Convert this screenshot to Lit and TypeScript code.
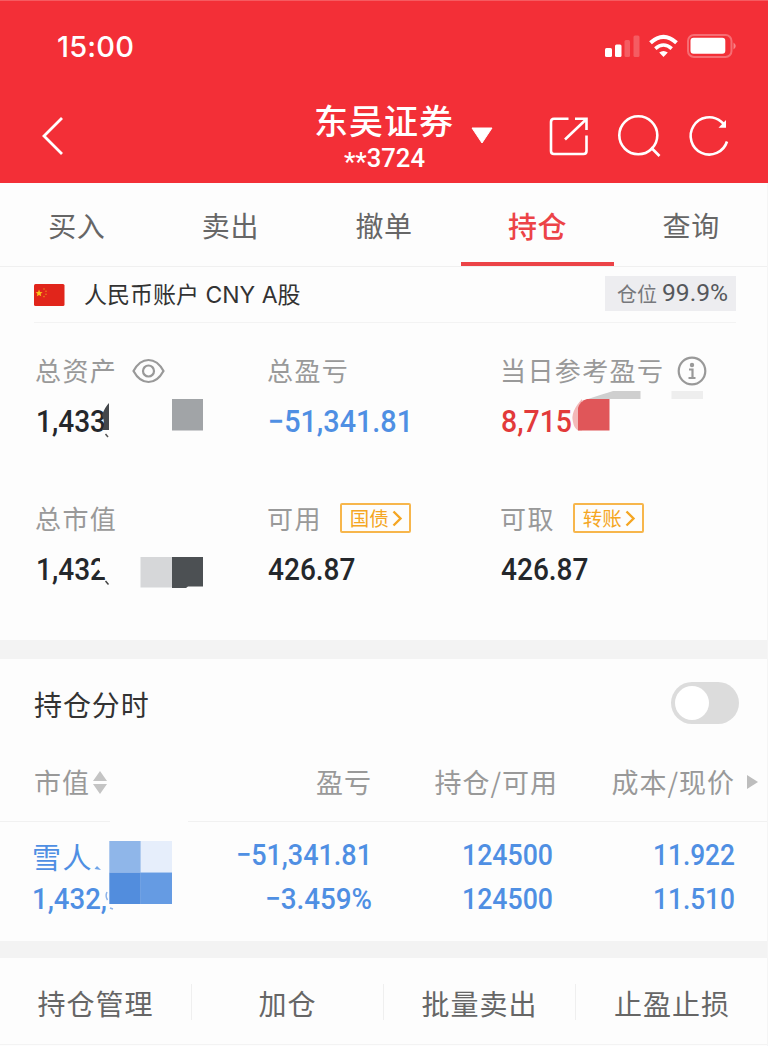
import { LitElement, html, css, svg } from "lit";
import { customElement } from "lit/decorators.js";

const num = (text: unknown, width: number, cls = "", size = 31) => html`<svg
  class="num ${cls}" width=${width} height="32" viewBox="0 0 ${width} 32">
  <text x="0" y="27" font-size=${size} textLength=${width} lengthAdjust="spacingAndGlyphs">${text}</text>
</svg>`;

const chevron = svg`<path d="M1.5 1.5 L8.5 8.5 L1.5 15.5" fill="none" stroke="#f5a623" stroke-width="2.4"/>`;

@customElement("app-root")
export class AppRoot extends LitElement {
  static styles = css`
    :host {
      display: block;
      position: relative;
      width: 768px;
      height: 1046px;
      overflow: hidden;
      background: #fdfdfd;
      font-family: Roboto, "Noto Sans CJK SC", sans-serif;
      color: #333;
      line-height: 1;
    }
    * { box-sizing: border-box; }
    svg { display: block; overflow: visible; flex: none; }
    .num text { font-family: Roboto, sans-serif; font-weight: 500; fill: #24272b; }
    .num.blue text { fill: #4f8fe3; }
    .num.red text { fill: #e23a3a; }
    .num.white text { fill: #fff; }
    .num.gray text { fill: #55575b; font-weight: 400; }

    header { height: 183px; background: #f32f37; color: #fff; border-top: 1px solid #f65a60; }
    .status { height: 91px; display: flex; align-items: center; padding: 0 32px 0 57px; justify-content: space-between; }
    .time { font: 550 29px/32px Inter, sans-serif; letter-spacing: 0.2px; }
    .nav { height: 91px; display: grid; grid-template-columns: 300px 168px 60px 1fr; align-items: start; }
    .back { padding: 25px 0 0 42px; }
    .title { display: flex; flex-direction: column; align-items: center; }
    .broker { font: 500 34px/40px "Noto Sans CJK SC", sans-serif; letter-spacing: 1px; margin-top: 8px; white-space: nowrap; }
    .acct { margin-top: 0; }
    .caret { padding: 35px 0 0 3px; }
    .tools { display: flex; padding: 23px 0 0 20px; gap: 28px; }

    .tabs { height: 84px; display: grid; grid-template-columns: repeat(5, 1fr); border-bottom: 1px solid #f0f0f0; }
    .tab { display: flex; justify-content: center; padding-top: 22px; font: 400 28px/40px "Noto Sans CJK SC", sans-serif; letter-spacing: 0.6px; color: #666; border-bottom: 4px solid transparent; }
    .tab.on { color: #ec4347; border-color: #ec4347; font-weight: 500; font-size: 29px; }

    .account { margin: 0 32px 0 34px; height: 56px; display: flex; align-items: center; border-bottom: 1px solid #f3f3f3; }
    .cny { margin-left: 19px; flex: 1; font: 400 23px/32px Inter, "Noto Sans CJK SC", sans-serif; color: #333; white-space: nowrap; }
    .pos { display: flex; align-items: center; width: 131px; height: 35px; background: #ededf0; padding-left: 12px; gap: 5px; margin-bottom: 2px; font: 400 20px/30px "Noto Sans CJK SC", sans-serif; color: #77787c; white-space: nowrap; }
    .pos .num { margin-bottom: 7px; }

    .stats { height: 317px; padding: 29px 0 0 35px; display: grid; grid-template-columns: 232px 233px 1fr; grid-template-rows: 148px 148px; }
    .label { height: 36px; display: flex; align-items: center; font: 400 26px/36px "Noto Sans CJK SC", sans-serif; letter-spacing: 1.4px; color: #999; white-space: nowrap; }
    .label svg { margin: 2px 0 0 15px; }
    .label .info { margin-left: 13px; }
    .stat .num { margin: 17px 0 0 0.5px; }
    .tag { display: flex; align-items: center; margin-left: 18px; width: 71px; height: 30px; border: 2px solid #f7b64c; border-radius: 2px; padding-left: 8px; font: 400 19.5px/26px "Noto Sans CJK SC", sans-serif; letter-spacing: 0; color: #f5a623; }
    .tag svg { margin: 0 0 0 3px; }

    .band { height: 19px; background: #f3f3f3; }
    .band.thin { height: 17px; }

    .intraday { height: 86px; padding: 2px 29px 0 34px; display: flex; justify-content: space-between; align-items: center; font: 400 28px/40px "Noto Sans CJK SC", sans-serif; letter-spacing: 0.9px; }
    .intraday > span { padding-top: 1px; }
    .switch { width: 68px; height: 42px; border-radius: 21px; background: #dcdcdc; padding: 4px; }
    .knob { width: 34px; height: 34px; border-radius: 50%; background: #fff; }

    .cols { display: grid; grid-template-columns: 138px 200px 186px 177px 33px; padding-left: 34px; }
    .head { height: 77px; padding-bottom: 2px; align-items: center; border-bottom: 1px solid #f1f1f1; font: 400 27px/40px "Noto Sans CJK SC", sans-serif; letter-spacing: 1px; color: #999; white-space: nowrap; }
    .head > div { display: flex; justify-content: flex-end; align-items: center; }
    .head > .first { justify-content: flex-start; }
    .head > .first svg { margin-left: 2px; }
    .head > .more { justify-content: flex-start; padding-left: 12px; }
    .row { height: 119px; padding-top: 16px; align-content: start; row-gap: 12px; color: #4f8fe3; }
    .row > div { height: 32px; display: flex; justify-content: flex-end; }
    .row > .first { justify-content: flex-start; margin-left: -2px; }
    .row > .qty { padding-right: 5px; }
    .row > .stock { padding-top: 1px; font: 400 29px/34px "Noto Sans CJK SC", sans-serif; letter-spacing: 1.5px; }

    .actions { height: 87px; display: grid; grid-template-columns: repeat(4, 1fr); align-items: center; border-bottom: 1px solid #f3f3f3; }
    .action { height: 36px; padding-top: 3px; display: flex; justify-content: center; align-items: center; font: 400 28px/36px "Noto Sans CJK SC", sans-serif; letter-spacing: 1px; color: #666; border-right: 1px solid #efefef; margin-top: 1px; }
    .action:last-child { border-right: 0; }
    .mask { position: absolute; left: 0; top: 0; pointer-events: none; }
  `;

  private stat(label: unknown, value: unknown) {
    return html`<div class="stat"><div class="label">${label}</div>${value}</div>`;
  }

  render() {
    const tabs = ["买入", "卖出", "撤单", "持仓", "查询"];
    const actions = ["持仓管理", "加仓", "批量卖出", "止盈止损"];
    return html`
      <header>
        <div class="status">
          <span class="time">15:00</span>
          <svg width="132" height="26" viewBox="604 34 132 26" fill="#fff">
            <rect x="605" y="48" width="7" height="9" rx="1.5"/>
            <rect x="615" y="44.5" width="6.5" height="12.5" rx="1.5"/>
            <rect x="624.5" y="40" width="5.5" height="17" rx="1.5" opacity=".22"/>
            <rect x="633.5" y="35.5" width="6" height="21.5" rx="1.5" opacity=".22"/>
            <g fill="none" stroke="#fff" stroke-width="4">
              <path d="M650.5 42.8 Q663.5 31 676.5 42.8"/>
              <path d="M655.3 48.6 Q663.5 41.4 671.7 48.6" stroke-width="3.6"/>
            </g>
            <path d="M659.2 52.6 Q663.5 49.4 667.8 52.6 L663.5 57 Z"/>
            <rect x="688" y="35" width="43.5" height="22" rx="6" fill="none" stroke="#fff" stroke-width="2" opacity=".3"/>
            <rect x="690.5" y="37.8" width="34.8" height="16" rx="3"/>
            <path d="M733.5 42.5 Q738 46 733.5 49.5 Z" opacity=".4"/>
          </svg>
        </div>
        <div class="nav">
          <div class="back">
            <svg width="22" height="38" viewBox="0 0 22 38"><path d="M20 1 L2 19 L20 37" fill="none" stroke="#fff" stroke-width="2.8"/></svg>
          </div>
          <div class="title">
            <div class="broker">东吴证券</div>
            <div class="acct">${num(svg`<tspan dy="4">**</tspan><tspan dy="-4">3724</tspan>`, 81, "white", 25)}</div>
          </div>
          <div class="caret">
            <svg width="22" height="17" viewBox="0 0 22 17"><path d="M1 1 H21 L11 16 Z" fill="#fff" stroke="#fff" stroke-width="1" stroke-linejoin="round"/></svg>
          </div>
          <div class="tools">
            <svg width="42" height="42" viewBox="548 115 42 42" fill="none" stroke="#fff" stroke-width="2.6">
              <path d="M568.5 118.8 H554 Q551 118.8 551 122 V151 Q551 154 554 154 H583.5 Q586.5 154 586.5 151 V135.5"/>
              <path d="M575 118.8 H586.5 V130 M586 119.5 L565 139.5"/>
            </svg>
            <svg width="42" height="42" viewBox="618 115 42 42" fill="none" stroke="#fff" stroke-width="2.6">
              <circle cx="638.3" cy="135.3" r="19"/><path d="M651 147.5 L659.5 156"/>
            </svg>
            <svg width="42" height="42" viewBox="688 115 42 42" fill="none" stroke="#fff" stroke-width="2.6">
              <path d="M727 141.5 A18.6 18.6 0 1 1 721 121.5 L725 125"/><path d="M726 120 V127.800 H718.500 Z" fill="#fff" stroke="none"/>
            </svg>
          </div>
        </div>
      </header>
      <nav class="tabs">${tabs.map((t) => html`<div class="tab ${t === "持仓" ? "on" : ""}">${t}</div>`)}</nav>
      <div class="account">
        <svg width="31" height="22" viewBox="0 0 31 22">
          <rect width="30.5" height="22" rx="1.5" fill="#e1251b"/>
          <path d="M5 5.5 L6 8 L8.6 8.2 L6.6 9.8 L7.3 12.3 L5 11 L2.8 12.3 L3.5 9.8 L1.6 8.2 L4.1 8 Z" fill="#f8c51c"/>
          <g fill="#e98a1a"><circle cx="10" cy="5" r=".8"/><circle cx="12" cy="7.3" r=".8"/><circle cx="12" cy="10.3" r=".8"/><circle cx="10" cy="12.6" r=".8"/></g>
        </svg>
        <div class="cny">人民币账户 CNY A股</div>
        <div class="pos">仓位${num("99.9%", 66, "gray", 23.5)}</div>
      </div>
      <section class="stats">
        ${this.stat(html`总资产<svg width="33" height="26" viewBox="0 0 33 26" fill="none" stroke="#999" stroke-width="2.2"><path d="M1.5 13 Q7.5 2 16.5 2 T31.5 13 Q25.500 24 16.5 24 T1.500 13 Z"/><circle cx="16.500" cy="13" r="5.500"/></svg>`, num("1,433", 70))}
        ${this.stat("总盈亏", num("−51,341.81", 145, "blue"))}
        ${this.stat(html`当日参考盈亏<svg class="info" width="30" height="30" viewBox="0 0 30 30" fill="none" stroke="#999" stroke-width="2.2"><circle cx="15" cy="15" r="13.300"/><circle cx="15" cy="9" r="2.200" fill="#999" stroke="none"/><path d="M12 13.500 H15.500 V22 M11.500 22 H18.500"/></svg>`, num("8,715", 71, "red"))}
        ${this.stat("总市值", num("1,432", 70))}
        ${this.stat(html`可用<span class="tag">国债<svg width="10" height="17" viewBox="0 0 10 17">${chevron}</svg></span>`, num("426.87", 87.5))}
        ${this.stat(html`可取<span class="tag">转账<svg width="10" height="17" viewBox="0 0 10 17">${chevron}</svg></span>`, num("426.87", 87.5))}
      </section>
      <div class="band"></div>
      <div class="intraday"><span>持仓分时</span><div class="switch"><div class="knob"></div></div></div>
      <div class="cols head">
        <div class="first">市值<svg width="16" height="26" viewBox="0 0 16 26" fill="#c4c4c4"><path d="M8 2 L15 12 H1 Z M8 25 L15 15 H1 Z"/></svg></div>
        <div>盈亏</div><div>持仓/可用</div><div>成本/现价</div>
        <div class="more"><svg width="11" height="14" viewBox="0 0 11 14"><path d="M0 0 L11 7 L0 14 Z" fill="#bdbdbd"/></svg></div>
      </div>
      <div class="cols row">
        <div class="first stock">雪人</div>
        <div>${num("−51,341.81", 136, "blue", 30)}</div>
        <div class="qty">${num("124500", 91, "blue", 30)}</div>
        <div>${num("11.922", 82, "blue", 30)}</div><div></div>
        <div class="first">${num("1,432,", 75, "blue", 30)}</div>
        <div>${num("−3.459%", 107, "blue", 30)}</div>
        <div class="qty">${num("124500", 91, "blue", 30)}</div>
        <div>${num("11.510", 82, "blue", 30)}</div><div></div>
      </div>
      <div class="band thin"></div>
      <div class="actions">${actions.map((a) => html`<div class="action">${a}</div>`)}</div>
      <svg class="mask" width="768" height="1046" viewBox="0 0 768 1046">
        <path d="M109 403 V430 H102 Q106 425 102 415 Q105 407 109 403 Z" fill="#44474b"/>
        <path d="M105.500 434 L108 437" stroke="#555" stroke-width="1.500"/>
        <rect x="172" y="399" width="31" height="31.500" fill="#a1a4a7"/>
        <path d="M588 399 Q603 394 613 391 H640.500 V399 Z" fill="#cfcfcf"/>
        <rect x="671.500" y="391" width="31.500" height="8" fill="#eeeeee"/>
        <path d="M582 399 Q570 412 573 422 Q574 428 578 430.500 H582 Z" fill="#f3b9b9"/>
        <path d="M578 430.500 V408 Q580 401 587 399 H609.500 V430.500 Z" fill="#e05659"/>
        <path d="M100 556 H112 V586 L97 568 L100 563 Z" fill="#fdfdfd"/>
        <path d="M105.500 581 L108.500 584.500" stroke="#444" stroke-width="1.500"/>
        <rect x="140.500" y="557" width="31.500" height="30.500" fill="#d6d7d9"/>
        <path d="M172 557 H203 V586.500 H188 L186 588 H172 Z" fill="#4c5053"/>
        <rect x="110" y="820" width="78" height="3" fill="#fdfdfd"/>
        <path d="M94.500 869 L101 870 L97 866 Z" fill="#6fa4e8"/>
        <path d="M107 892 Q105 896 107.500 900 M110 908 L113 909" stroke="#8db4ea" stroke-width="1.500" fill="none"/>
        <rect x="109.300" y="841" width="31.500" height="31.500" fill="#8fb6e9"/>
        <rect x="140.800" y="841" width="31.200" height="31.500" fill="#e6eefb"/>
        <rect x="109.300" y="872.500" width="31.500" height="31.500" fill="#528ddd"/>
        <rect x="140.800" y="872.500" width="31.200" height="31.500" fill="#659be3"/>
        <rect x="767" y="183" width="1" height="863" fill="#f5f5f5"/>
      </svg>
    `;
  }
}
